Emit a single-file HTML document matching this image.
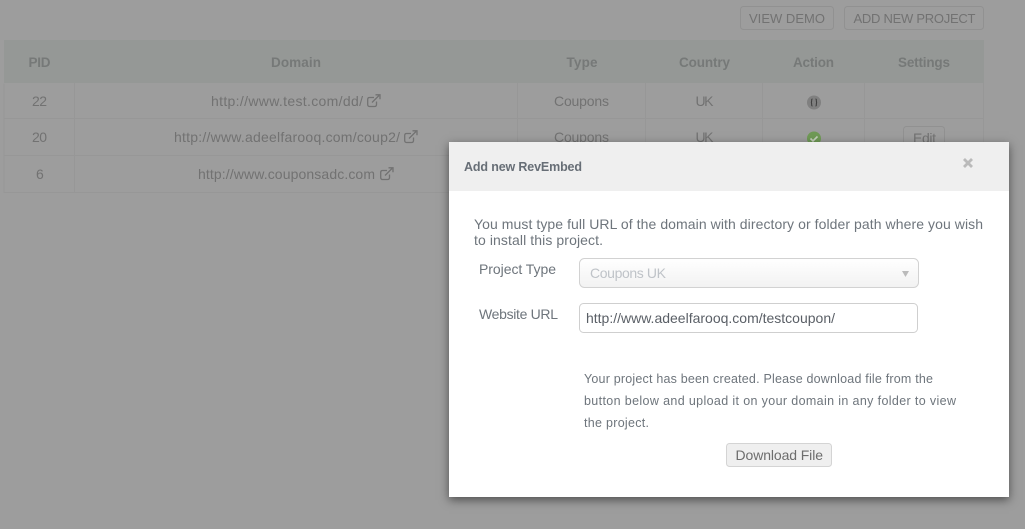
<!DOCTYPE html>
<html><head><meta charset="utf-8"><style>
html,body{margin:0;padding:0;width:1025px;height:529px;overflow:hidden;background:#9d9d9d}
#m{position:absolute;left:449px;top:142px;width:560px;height:355px;background:#fff;box-shadow:0 3px 9px rgba(0,0,0,.5)}
svg{position:absolute;left:0;top:0}
text{font-family:"Liberation Sans",sans-serif;font-size:14px}
.b text{fill:#727272}
.b text.h{font-weight:bold;fill:#767978;font-size:13.5px}
.s{font-size:13px !important}
.d{fill:#6e757c}
</style></head><body>
<svg width="1025" height="529" style="z-index:1">
<rect x="4" y="40" width="980" height="43" fill="#959896"/>
<g stroke="#979797" stroke-width="1" fill="none">
<path d="M4 83.500V192.500H983.500V83M4 118.500H984M4 155.500H984M74.500 83V192M517.500 83V192M645.500 83V192M762.500 83V192M864.500 83V192"/>
</g>
<g fill="none" stroke="#919191">
<rect x="740.500" y="6.500" width="93" height="23" rx="3"/>
<rect x="844.500" y="6.500" width="139" height="23" rx="3"/>
<rect x="903.500" y="126.500" width="41" height="24" rx="3"/>
</g>
<g class="b">
<text class="s" x="749" y="23" textLength="76">VIEW DEMO</text>
<text class="s" x="853.500" y="23" textLength="122">ADD NEW PROJECT</text>
<text class="h" x="28.500" y="67" textLength="22">PID</text>
<text class="h" x="271" y="67" textLength="50">Domain</text>
<text class="h" x="566.500" y="67" textLength="31">Type</text>
<text class="h" x="679" y="67" textLength="51">Country</text>
<text class="h" x="793" y="67" textLength="41">Action</text>
<text class="h" x="898" y="67" textLength="52">Settings</text>
<text x="32" y="106" textLength="15">22</text>
<text x="32" y="142" textLength="15">20</text>
<text x="36" y="179" textLength="7">6</text>
<text x="211" y="106" textLength="152">http://www.test.com/dd/</text>
<text x="174" y="142" textLength="226">http://www.adeelfarooq.com/coup2/</text>
<text x="198" y="179" textLength="177">http://www.couponsadc.com</text>
<text x="554" y="106" textLength="55">Coupons</text>
<text x="554" y="142" textLength="55">Coupons</text>
<text x="695.500" y="106" textLength="18">UK</text>
<text x="695.500" y="142" textLength="18">UK</text>
<text x="913" y="143" textLength="23">Edit</text>
</g>
<g fill="none" stroke="#727272" stroke-width="1.300">
<g transform="translate(367,94)"><path d="M9.500 7.500V10.500Q9.500 12.500 7.500 12.500H2.500Q.7 12.500 .7 10.500V5.500Q.7 3.500 2.500 3.500H7"/><path d="M5 8.500L12 1.500M8.500 .8H13V5.300"/></g>
<g transform="translate(404,130)"><path d="M9.500 7.500V10.500Q9.500 12.500 7.500 12.500H2.500Q.7 12.500 .7 10.500V5.500Q.7 3.500 2.500 3.500H7"/><path d="M5 8.500L12 1.500M8.500 .8H13V5.300"/></g>
<g transform="translate(380,167)"><path d="M9.500 7.500V10.500Q9.500 12.500 7.500 12.500H2.500Q.7 12.500 .7 10.500V5.500Q.7 3.500 2.500 3.500H7"/><path d="M5 8.500L12 1.500M8.500 .8H13V5.300"/></g>
</g>
<circle cx="814" cy="102.500" r="7" fill="#808080"/>
<path d="M812.500 99Q811.500 99 811.700 100.500Q811.700 102.500 810.900 102.500Q811.700 102.500 811.700 104.500Q811.500 106 812.500 106M815.500 99Q816.500 99 816.300 100.500Q816.300 102.500 817.100 102.500Q816.300 102.500 816.300 104.500Q816.500 106 815.500 106" fill="none" stroke="#3a3a3a" stroke-width="1"/>
<circle cx="814" cy="138.500" r="7" fill="#6f9a55"/>
<path d="M810.500 138.500L813 141L817.500 136.500" fill="none" stroke="#c5cfbd" stroke-width="1.600"/>
</svg>
<div id="m" style="z-index:2"></div>
<svg width="1025" height="529" style="z-index:3">
<rect x="449" y="142" width="560" height="49" fill="#efefef"/>
<text x="464" y="171" textLength="118" style="font-weight:bold;font-size:12.500px" fill="#676e76">Add new RevEmbed</text>
<path d="M964 159L972 167M972 159L964 167" stroke="#bababa" stroke-width="2.800" fill="none"/>
<text class="d" x="474" y="229" textLength="509">You must type full URL of the domain with directory or folder path where you wish</text>
<text class="d" x="474" y="245" textLength="129">to install this project.</text>
<text class="d" x="479" y="274" textLength="77">Project Type</text>
<text class="d" x="479" y="319" textLength="79">Website URL</text>
<defs><linearGradient id="g" x1="0" y1="0" x2="0" y2="1"><stop offset="0" stop-color="#fff"/><stop offset="1" stop-color="#f2f2f2"/></linearGradient></defs>
<rect x="579.500" y="258.500" width="339" height="29" rx="5" fill="url(#g)" stroke="#d2d2d2"/>
<text x="590" y="278" textLength="76" fill="#bfc3c8">Coupons UK</text>
<path d="M902 271H909L905.500 277Z" fill="#bbbbbb"/>
<rect x="579.500" y="303.500" width="338" height="29" rx="4" fill="#fff" stroke="#cfcfcf"/>
<text x="586" y="323" textLength="249" fill="#5a5f66">http://www.adeelfarooq.com/testcoupon/</text>
<text class="d" x="584" y="383" textLength="349" style="font-size:12.500px">Your project has been created. Please download file from the</text>
<text class="d" x="584" y="405" textLength="372" style="font-size:12.500px">button below and upload it on your domain in any folder to view</text>
<text class="d" x="584" y="427" textLength="65" style="font-size:12.500px">the project.</text>
<rect x="726.500" y="443.500" width="105" height="23" rx="3" fill="#efefef" stroke="#d4d4d4"/>
<text x="735.500" y="460" textLength="87.500" fill="#6d6d6d">Download File</text>
</svg>
</body></html>
